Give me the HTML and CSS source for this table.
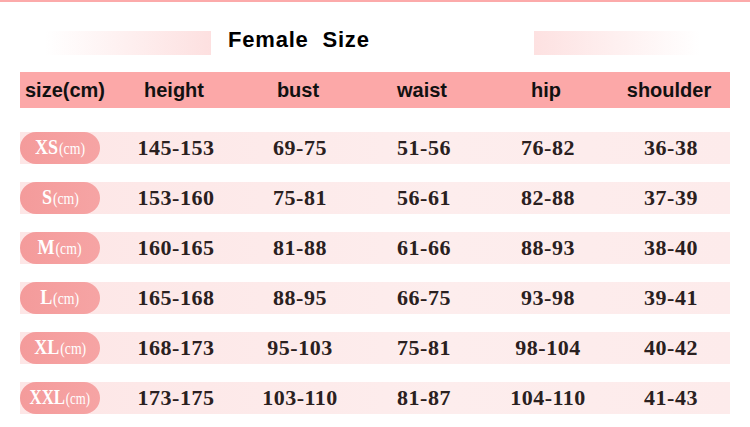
FILE: index.html
```html
<!DOCTYPE html>
<html>
<head>
<meta charset="utf-8">
<link rel="stylesheet" href="styles.css">
</head>
<body>
<div class="band"></div>
<div class="title-row">
  <div class="fade fade-left"></div>
  <div class="title">Female&nbsp; Size</div>
  <div class="fade fade-right"></div>
</div>
<div class="table">
  <div class="head">
    <div class="hc first">size(cm)</div>
    <div class="hc">height</div>
    <div class="hc">bust</div>
    <div class="hc">waist</div>
    <div class="hc">hip</div>
    <div class="hc">shoulder</div>
  </div>
  <div class="rows">
    <div class="row">
      <div class="pill"><span class="lbl"><span class="sz">XS</span><span class="cm">(cm)</span></span></div>
      <div class="dc">145-153</div><div class="dc">69-75</div><div class="dc">51-56</div><div class="dc">76-82</div><div class="dc">36-38</div>
    </div>
    <div class="row">
      <div class="pill"><span class="lbl"><span class="sz">S</span><span class="cm">(cm)</span></span></div>
      <div class="dc">153-160</div><div class="dc">75-81</div><div class="dc">56-61</div><div class="dc">82-88</div><div class="dc">37-39</div>
    </div>
    <div class="row">
      <div class="pill"><span class="lbl"><span class="sz">M</span><span class="cm">(cm)</span></span></div>
      <div class="dc">160-165</div><div class="dc">81-88</div><div class="dc">61-66</div><div class="dc">88-93</div><div class="dc">38-40</div>
    </div>
    <div class="row">
      <div class="pill"><span class="lbl"><span class="sz">L</span><span class="cm">(cm)</span></span></div>
      <div class="dc">165-168</div><div class="dc">88-95</div><div class="dc">66-75</div><div class="dc">93-98</div><div class="dc">39-41</div>
    </div>
    <div class="row">
      <div class="pill"><span class="lbl"><span class="sz">XL</span><span class="cm">(cm)</span></span></div>
      <div class="dc">168-173</div><div class="dc">95-103</div><div class="dc">75-81</div><div class="dc">98-104</div><div class="dc">40-42</div>
    </div>
    <div class="row">
      <div class="pill"><span class="lbl tight"><span class="sz">XXL</span><span class="cm">(cm)</span></span></div>
      <div class="dc">173-175</div><div class="dc">103-110</div><div class="dc">81-87</div><div class="dc">104-110</div><div class="dc">41-43</div>
    </div>
  </div>
</div>
</body>
</html>
```
FILE: styles.css
```css
html, body {
  margin: 0;
  padding: 0;
  background: #ffffff;
}
body {
  width: 750px;
  height: 427px;
  overflow: hidden;
  font-family: "Liberation Sans", Arial, sans-serif;
}
.band {
  height: 2px;
  background: #fcaaaa;
}
.title-row {
  display: flex;
  align-items: center;
  height: 24px;
  margin-top: 29px;
}
.fade {
  width: 166px;
  height: 24px;
}
.fade-left {
  margin-left: 45px;
  background: linear-gradient(to right, rgba(253, 226, 226, 0), #fde0e0);
}
.fade-right {
  margin-left: auto;
  margin-right: 50px;
  background: linear-gradient(to right, #fde1e1, rgba(253, 226, 226, 0));
}
.title {
  margin-left: 17px;
  font-weight: bold;
  font-size: 22px;
  letter-spacing: 0.8px;
  line-height: 24px;
  padding-bottom: 6px;
  color: #000;
}
.table {
  margin: 17px 20px 0 20px;
}
.head, .row {
  display: grid;
  grid-template-columns: 92px 124px 124px 124px 124px 122px;
  align-items: center;
}
.head {
  height: 36px;
  background: #fca8a8;
}
.hc {
  font-weight: bold;
  font-size: 20px;
  color: #111;
  text-align: center;
}
.hc.first {
  text-align: left;
  padding-left: 5px;
}
.rows {
  margin-top: 24px;
  display: flex;
  flex-direction: column;
  gap: 18px;
}
.row {
  height: 32px;
  background: linear-gradient(to right, #fde6e6, #fdeded 60%, #fdebeb);
}
.pill {
  width: 80px;
  height: 32px;
  border-radius: 16px;
  background: linear-gradient(to right, #f49b9b, #f6a4a4);
  color: #fff;
  font-family: "Liberation Serif", "Times New Roman", serif;
  display: flex;
  align-items: center;
  justify-content: center;
  line-height: 32px;
}
.lbl {
  display: inline-block;
  transform: scaleX(0.86);
  white-space: nowrap;
}
.lbl.tight {
  transform: scaleX(0.8);
}
.sz {
  font-size: 21px;
  font-weight: bold;
}
.cm {
  font-size: 16px;
  margin-left: 1px;
}
.dc {
  font-family: "Liberation Serif", "Times New Roman", serif;
  font-weight: bold;
  font-size: 22px;
  letter-spacing: 0.5px;
  color: #2a2020;
  text-align: center;
  padding-left: 4px;
}
```
